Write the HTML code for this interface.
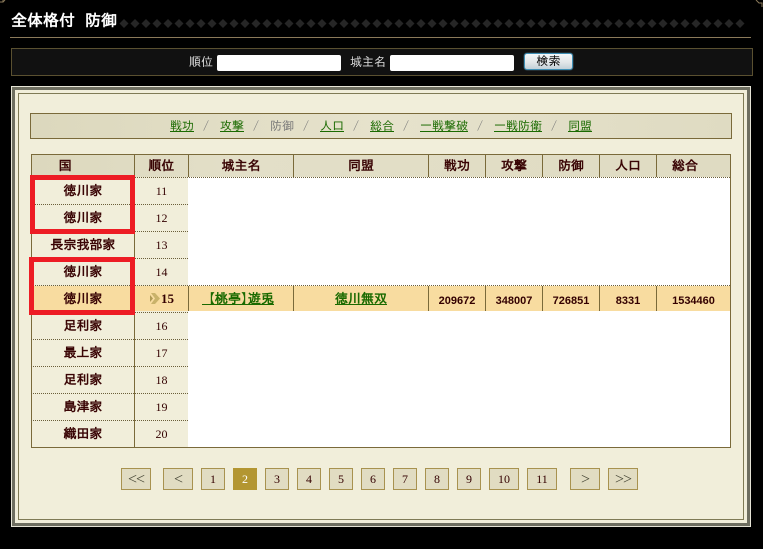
<!DOCTYPE html>
<html lang="ja"><head><meta charset="utf-8"><title>全体格付 防御</title>
<style>
html,body{margin:0;padding:0;background:#000}
body{width:763px;height:549px;position:relative;overflow:hidden;font-family:"Liberation Serif","IPAGothic","Noto Sans CJK JP",sans-serif;color:#330000}
div,a,span{position:absolute;box-sizing:border-box}
.t{white-space:nowrap;text-align:center;line-height:14px;font-size:12px}
.jp{font-family:"IPAGothic","Noto Sans CJK JP",sans-serif}
.b{font-weight:bold;font-family:"IPAGothic","Noto Sans CJK JP",sans-serif;color:#3a0505;font-size:13px}
.num{font-family:"Liberation Serif",serif;font-size:12px;color:#330000}
.d{font-family:"Liberation Sans",sans-serif;font-weight:bold;font-size:11px;color:#330000}
.v{width:1px;background:#7a6a3a}
.h{height:1px;left:31px;background-image:linear-gradient(90deg,#6b5f3a 50%,transparent 50%);background-size:2px 1px}
.nav{top:119px;font-family:"IPAGothic","Noto Sans CJK JP",sans-serif;font-size:12px;line-height:14px;white-space:nowrap;color:#777}
.nav.l{color:#1a6a00;text-decoration:underline}
.p{top:468px;height:22px;border:1px solid #a8924f;background:#e1dcc2;font-size:12px;line-height:20px;text-align:center;color:#330000;font-family:"Liberation Serif",serif}
.ar{font-size:16px;line-height:22px;letter-spacing:-1px;font-weight:normal;color:#443}
.red{border:5px solid #ed1c24}
.br{font-weight:bold}
</style></head><body>

<svg style="position:absolute;left:0;top:0" width="8" height="5"><path d="M0 2H3V0M3 2L5 0" stroke="#8b7a5a" fill="none"/></svg>
<svg style="position:absolute;left:755px;top:0" width="8" height="8"><path d="M1 0L4 3H7V7" stroke="#8b7a5a" fill="none"/></svg>

<div class="t" style="left:11px;top:11px;font-size:16px;line-height:18px;color:#fff;font-weight:bold;font-family:'IPAGothic','Noto Sans CJK JP',sans-serif;text-align:left;word-spacing:2px">全体格付 防御</div>
<svg style="position:absolute;left:118px;top:18px" width="627" height="12"><defs><pattern id="dm" width="11" height="12" patternUnits="userSpaceOnUse"><path d="M6 1 L10.500 5.500 L6 10 L1.500 5.500Z" fill="#262626"/></pattern></defs><rect width="627" height="12" fill="url(#dm)"/></svg>
<div style="left:10px;top:37px;width:741px;height:1px;background:#8b7a5a"></div>

<div style="left:11px;top:48px;width:742px;height:28px;background:#111;border:1px solid #5a5030"></div>
<div class="t jp" style="left:189px;top:55px;color:#ddd;text-align:left">順位</div>
<div style="left:217px;top:55px;width:124px;height:16px;background:#fff;border-radius:2px"></div>
<div class="t jp" style="left:350px;top:55px;color:#ddd;text-align:left">城主名</div>
<div style="left:390px;top:55px;width:124px;height:16px;background:#fff;border-radius:2px"></div>
<div class="t jp" style="left:524px;top:53px;width:49px;height:17px;border:1px solid #3f8fb5;border-radius:3px;background:linear-gradient(#f4f8fa,#e3e6e8 55%,#c3d0d8);color:#000;line-height:14px;box-shadow:0 0 1px #7fc6e6">検索</div>

<div style="left:11px;top:86px;width:740px;height:441px;background:#f1eeda;border:1px solid #e6e4d6"></div>
<div style="left:12px;top:87px;width:738px;height:439px;border:3px solid #6e6e60"></div>
<div style="left:15px;top:90px;width:732px;height:433px;border:1px solid #f1eeda"></div>
<div style="left:18px;top:93px;width:726px;height:427px;border:1px solid #7f7a55"></div>

<div style="left:30px;top:113px;width:702px;height:26px;border:1px solid #7a6a3a;background:linear-gradient(90deg,#dcd8bd,#e6e2cc 50%,#dfdbc2)"></div>
<span class="nav l" style="left:170px">戦功</span><span class="nav" style="left:203px">/</span>
<span class="nav l" style="left:220px">攻撃</span><span class="nav" style="left:253px">/</span>
<span class="nav" style="left:270px">防御</span><span class="nav" style="left:303px">/</span>
<span class="nav l" style="left:320px">人口</span><span class="nav" style="left:353px">/</span>
<span class="nav l" style="left:370px">総合</span><span class="nav" style="left:403px">/</span>
<span class="nav l" style="left:420px">一戦撃破</span><span class="nav" style="left:477px">/</span>
<span class="nav l" style="left:494px">一戦防衛</span><span class="nav" style="left:551px">/</span>
<span class="nav l" style="left:568px">同盟</span>

<!-- table -->
<div style="left:31px;top:154px;width:700px;height:294px;background:#fff"></div>
<div style="left:31px;top:154px;width:700px;height:23px;background:linear-gradient(90deg,#dcd8bd,#e3dfc8 30%,#dfdbc2)"></div>
<div style="left:32px;top:177px;width:156px;height:270px;background:#f1eeda"></div>
<div style="left:32px;top:286px;width:698px;height:25px;background:#f8dca0"></div>
<div style="left:31px;top:154px;width:700px;height:294px;border:1px solid #7a6a3a"></div>

<div class="v" style="left:134px;top:154px;height:293px"></div>
<div class="v" style="left:188px;top:154px;height:23px"></div>
<div class="v" style="left:293px;top:154px;height:23px"></div>
<div class="v" style="left:428px;top:154px;height:23px"></div>
<div class="v" style="left:485px;top:154px;height:23px"></div>
<div class="v" style="left:542px;top:154px;height:23px"></div>
<div class="v" style="left:599px;top:154px;height:23px"></div>
<div class="v" style="left:656px;top:154px;height:23px"></div>
<div class="v" style="left:188px;top:286px;height:25px"></div>
<div class="v" style="left:293px;top:286px;height:25px"></div>
<div class="v" style="left:428px;top:286px;height:25px"></div>
<div class="v" style="left:485px;top:286px;height:25px"></div>
<div class="v" style="left:542px;top:286px;height:25px"></div>
<div class="v" style="left:599px;top:286px;height:25px"></div>
<div class="v" style="left:656px;top:286px;height:25px"></div>

<div class="h" style="top:177px;width:699px"></div>
<div class="h" style="top:204px;width:157px"></div>
<div class="h" style="top:231px;width:157px"></div>
<div class="h" style="top:258px;width:157px"></div>
<div class="h" style="top:285px;width:699px"></div>
<div class="h" style="top:312px;width:157px"></div>
<div class="h" style="top:339px;width:157px"></div>
<div class="h" style="top:366px;width:157px"></div>
<div class="h" style="top:393px;width:157px"></div>
<div class="h" style="top:420px;width:157px"></div>

<div class="t b" style="left:32px;top:159px;width:66px">国</div>
<div class="t b" style="left:135px;top:159px;width:53px">順位</div>
<div class="t b" style="left:189px;top:159px;width:104px">城主名</div>
<div class="t b" style="left:294px;top:159px;width:134px">同盟</div>
<div class="t b" style="left:429px;top:159px;width:56px">戦功</div>
<div class="t b" style="left:486px;top:159px;width:56px">攻撃</div>
<div class="t b" style="left:543px;top:159px;width:56px">防御</div>
<div class="t b" style="left:600px;top:159px;width:56px">人口</div>
<div class="t b" style="left:657px;top:159px;width:56px">総合</div>

<div class="t b" style="left:32px;top:184px;width:102px">徳川家</div><div class="t num" style="left:135px;top:184px;width:53px">11</div>
<div class="t b" style="left:32px;top:211px;width:102px">徳川家</div><div class="t num" style="left:135px;top:211px;width:53px">12</div>
<div class="t b" style="left:32px;top:238px;width:102px">長宗我部家</div><div class="t num" style="left:135px;top:238px;width:53px">13</div>
<div class="t b" style="left:32px;top:265px;width:102px">徳川家</div><div class="t num" style="left:135px;top:265px;width:53px">14</div>
<div class="t b" style="left:32px;top:292px;width:102px">徳川家</div>
<svg style="position:absolute;left:150px;top:292px" width="11" height="13"><path d="M1 1H5L10 6.500L5 12H1L5 6.500Z" fill="#c9b26a"/><path d="M0 3L3 6.500L0 10Z" fill="#b09a55"/></svg>
<div class="t" style="left:161px;top:292px;font-family:'Liberation Serif',serif;font-weight:bold;font-size:13px;color:#330000;text-align:left">15</div>
<div class="t b" style="left:189px;top:292px;width:104px;color:#1a6a00;text-decoration:underline"><b class="br" style="margin-left:-6px">【</b>桃亭<b class="br" style="letter-spacing:-6px">】</b>遊兎</div>
<div class="t b" style="left:294px;top:292px;width:134px;color:#1a6a00;text-decoration:underline">徳川無双</div>
<div class="t d" style="left:429px;top:294px;width:56px">209672</div>
<div class="t d" style="left:486px;top:294px;width:56px">348007</div>
<div class="t d" style="left:543px;top:294px;width:56px">726851</div>
<div class="t d" style="left:600px;top:294px;width:56px">8331</div>
<div class="t d" style="left:657px;top:294px;width:73px">1534460</div>

<div class="t b" style="left:32px;top:319px;width:102px">足利家</div><div class="t num" style="left:135px;top:319px;width:53px">16</div>
<div class="t b" style="left:32px;top:346px;width:102px">最上家</div><div class="t num" style="left:135px;top:346px;width:53px">17</div>
<div class="t b" style="left:32px;top:373px;width:102px">足利家</div><div class="t num" style="left:135px;top:373px;width:53px">18</div>
<div class="t b" style="left:32px;top:400px;width:102px">島津家</div><div class="t num" style="left:135px;top:400px;width:53px">19</div>
<div class="t b" style="left:32px;top:427px;width:102px">織田家</div><div class="t num" style="left:135px;top:427px;width:53px">20</div>

<div class="red" style="left:30px;top:175px;width:105px;height:59px"></div>
<div class="red" style="left:29px;top:257px;width:106px;height:58px"></div>

<div class="p ar" style="left:121px;width:30px">&lt;&lt;</div>
<div class="p ar" style="left:163px;width:30px">&lt;</div>
<div class="p" style="left:201px;width:24px">1</div>
<div class="p" style="left:233px;width:24px;background:#b39632;border-color:#b39632;color:#fff">2</div>
<div class="p" style="left:265px;width:24px">3</div>
<div class="p" style="left:297px;width:24px">4</div>
<div class="p" style="left:329px;width:24px">5</div>
<div class="p" style="left:361px;width:24px">6</div>
<div class="p" style="left:393px;width:24px">7</div>
<div class="p" style="left:425px;width:24px">8</div>
<div class="p" style="left:457px;width:24px">9</div>
<div class="p" style="left:489px;width:30px">10</div>
<div class="p" style="left:527px;width:30px">11</div>
<div class="p ar" style="left:570px;width:30px">&gt;</div>
<div class="p ar" style="left:608px;width:30px">&gt;&gt;</div>
</body></html>
